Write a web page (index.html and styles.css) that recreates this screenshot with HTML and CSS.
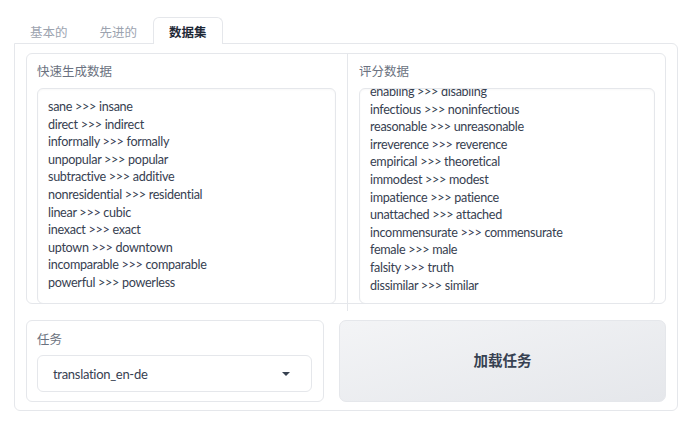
FILE: index.html
```html
<!DOCTYPE html>
<html lang="zh">
<head>
<meta charset="utf-8">
<link rel="stylesheet" href="styles.css">
</head>
<body>
<div class="tabs">
  <div class="tab-nav">
    <button class="tab">基本的</button>
    <button class="tab">先进的</button>
    <button class="tab active">数据集</button>
  </div>
  <div class="panel">
    <div class="data-row">
      <div class="col">
        <div class="label">快速生成数据</div>
        <div class="textbox">
          <div class="lines">
            <div>sane &gt;&gt;&gt; insane</div>
            <div>direct &gt;&gt;&gt; indirect</div>
            <div>informally &gt;&gt;&gt; formally</div>
            <div>unpopular &gt;&gt;&gt; popular</div>
            <div>subtractive &gt;&gt;&gt; additive</div>
            <div>nonresidential &gt;&gt;&gt; residential</div>
            <div>linear &gt;&gt;&gt; cubic</div>
            <div>inexact &gt;&gt;&gt; exact</div>
            <div>uptown &gt;&gt;&gt; downtown</div>
            <div>incomparable &gt;&gt;&gt; comparable</div>
            <div>powerful &gt;&gt;&gt; powerless</div>
          </div>
        </div>
      </div>
      <div class="col col-right">
        <div class="label">评分数据</div>
        <div class="textbox">
          <div class="lines scrolled">
            <div>enabling &gt;&gt;&gt; disabling</div>
            <div>infectious &gt;&gt;&gt; noninfectious</div>
            <div>reasonable &gt;&gt;&gt; unreasonable</div>
            <div>irreverence &gt;&gt;&gt; reverence</div>
            <div>empirical &gt;&gt;&gt; theoretical</div>
            <div>immodest &gt;&gt;&gt; modest</div>
            <div>impatience &gt;&gt;&gt; patience</div>
            <div>unattached &gt;&gt;&gt; attached</div>
            <div>incommensurate &gt;&gt;&gt; commensurate</div>
            <div>female &gt;&gt;&gt; male</div>
            <div>falsity &gt;&gt;&gt; truth</div>
            <div>dissimilar &gt;&gt;&gt; similar</div>
          </div>
        </div>
      </div>
    </div>
    <div class="task-row">
      <div class="task-box">
        <div class="label">任务</div>
        <div class="dropdown">
          <span class="dd-value">translation_en-de</span>
          <svg class="dd-arrow" width="10" height="6" viewBox="0 0 10 6"><path d="M1 1 L5 5 L9 1 Z" fill="#374151"/></svg>
        </div>
      </div>
      <button class="load-btn">加载任务</button>
    </div>
  </div>
</div>
</body>
</html>
```
FILE: styles.css
```css
* { box-sizing: border-box; }
html, body { margin: 0; padding: 0; background: #fff; }
body {
  font-family: "Lato", "Noto Sans CJK SC", sans-serif;
  color: #374151;
  padding: 17px 15px 0 14px;
}
.tab-nav {
  display: flex;
  align-items: flex-start;
  height: 26px;
}
.tab {
  font-family: "Noto Sans CJK SC", sans-serif;
  font-size: 12.5px;
  line-height: 25px;
  color: #9ca3af;
  background: none;
  border: 1px solid transparent;
  border-bottom: none;
  height: 27px;
  padding: 0 15px;
  margin: 0;
  cursor: pointer;
}
.tab.active {
  color: #1f2937;
  font-weight: 600;
  background: #fff;
  border-color: #e5e7eb;
  border-radius: 6px 6px 0 0;
  position: relative;
  z-index: 1;
}
.panel {
  border: 1px solid #e5e7eb;
  border-radius: 0 6px 6px 6px;
  padding: 9px 11px 9px 11px;
  height: 368px;
}
.data-row {
  display: grid;
  grid-template-columns: 320px 1fr;
  border: 1px solid #e5e7eb;
  border-radius: 6px;
  height: 251px;
}
.col {
  padding: 8px 11px 7px 10px;
  display: flex;
  flex-direction: column;
}
.col-right {
  border-left: 1px solid #e5e7eb;
  padding: 8px 10px 7px 11px;
}
.label {
  font-family: "Noto Sans CJK SC", sans-serif;
  font-size: 12.5px;
  color: #6b7280;
  line-height: 18px;
  margin-bottom: 8px;
}
.textbox {
  flex: 1;
  border: 1px solid #e5e7eb;
  border-radius: 6px;
  overflow: hidden;
  padding: 9px 10px;
  box-shadow: inset 0 1px 2px rgba(0,0,0,0.03);
}
.lines {
  font-size: 12.6px;
  line-height: 17.6px;
  letter-spacing: -0.3px;
  color: #374151;
  white-space: nowrap;
}
.scrolled { margin-top: -15px; }
.task-row {
  display: grid;
  grid-template-columns: 298px 1fr;
  gap: 15px;
  margin-top: 16px;
  height: 81px;
}
.task-box {
  border: 1px solid #e5e7eb;
  border-radius: 6px;
  padding: 9px 11px 9px 10px;
}
.task-box .label { margin-bottom: 7px; }
.dropdown {
  display: flex;
  align-items: center;
  justify-content: space-between;
  height: 37px;
  border: 1px solid #e5e7eb;
  border-radius: 6px;
  padding: 0 20px 0 15px;
}
.dd-value {
  font-size: 13px;
  letter-spacing: -0.3px;
  color: #374151;
}
.load-btn {
  font-family: "Noto Sans CJK SC", sans-serif;
  font-size: 14.5px;
  line-height: 20px;
  font-weight: 700;
  color: #374151;
  border: 1px solid #e5e7eb;
  border-radius: 7px;
  background: linear-gradient(to bottom right, #f3f4f6, #e5e7eb);
  cursor: pointer;
  padding: 0 0 3px 0;
}
```
